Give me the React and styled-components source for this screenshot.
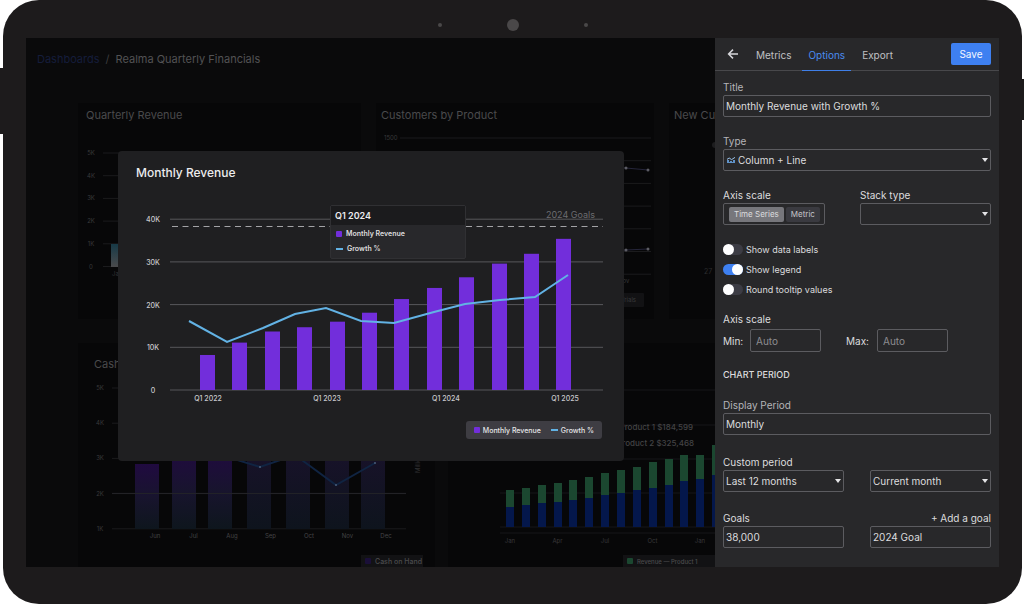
import React, { useState } from "react";
import styled, { createGlobalStyle } from "styled-components";

const revenue = [8.2, 11.1, 13.7, 14.7, 16, 18.1, 21.3, 23.9, 26.4, 29.6, 31.9, 35.4];
const growth = [
  [71, 131], [109, 152], [145, 138], [177, 124], [208, 118], [243, 131],
  [276, 133], [316, 122], [347, 114], [382, 110], [417, 107], [450, 85],
];
const quarters = [[90, "Q1 2022"], [209, "Q1 2023"], [328, "Q1 2024"], [447, "Q1 2025"]];

const products = [
  [20, 37], [22, 39], [24, 42], [25, 44], [27, 47], [29, 50], [32, 54],
  [34, 57], [37, 60], [39, 65], [42, 68], [46, 72], [48, 72], [52, 82],
];

function ArrowLeft() {
  return (
    <svg width="12" height="12" viewBox="0 0 12 12" fill="none" stroke="#d6d6da" strokeWidth="1.5">
      <path d="M11 6H2M6 1.6L1.6 6L6 10.4" />
    </svg>
  );
}

function ColumnLineIcon() {
  return (
    <svg width="9" height="8" viewBox="0 0 9 8">
      <path d="M0 4h2v3H0zM3 5h2v2H3zM6 4h2v3H6z" fill="#5f92c8" />
      <path d="M0 6.5h8" stroke="#5f92c8" />
      <path d="M0 3.4L2.2 2L4.6 3.6L8 1.4" stroke="#9cc4ec" fill="none" />
    </svg>
  );
}

function RevenueChart() {
  return (
    <Chart viewBox="0 0 506 214">
      {[0, 10, 20, 30, 40].map((v) => (
        <g key={v}>
          <line x1="52" x2="485" y1={200 - v * 4.27} y2={200 - v * 4.27} stroke="#57575b" />
          <text x="35" y={203 - v * 4.27} textAnchor="middle" fontSize="7" fontWeight="500" fill="#c9c9cc">
            {v ? `${v}K` : "0"}
          </text>
        </g>
      ))}
      <line x1="54" x2="485" y1="36.5" y2="36.5" stroke="#a3a3a6" strokeDasharray="6 4.5" />
      <text x="477" y="28" textAnchor="end" fontSize="9" fill="#6c6c70">2024 Goals</text>
      {revenue.map((v, i) => (
        <rect key={i} x={Math.round(82 + i * 32.4)} y={200 - v * 4.27} width="15" height={v * 4.27} fill="#722edb" />
      ))}
      <polyline points={growth.join(" ")} fill="none" stroke="#62b2e4" strokeWidth="2" />
      {quarters.map(([x, label]) => (
        <text key={label} x={x} y="211" textAnchor="middle" fontSize="7" fontWeight="500" fill="#c9c9cc">
          {label}
        </text>
      ))}
    </Chart>
  );
}

function QuarterlyChart() {
  return (
    <Chart viewBox="0 0 283 180">
      <defs>
        <linearGradient id="teal" x1="0" x2="0" y1="0" y2="1">
          <stop offset="0" stopColor="#173a47" />
          <stop offset="1" stopColor="#4a4a4c" />
        </linearGradient>
      </defs>
      {["5K", "4K", "3K", "2K", "1K", "0"].map((label, i) => (
        <g key={label}>
          <line x1="25" x2="268" y1={26 + i * 22.7} y2={26 + i * 22.7} stroke="#1b1b1d" />
          <text x="13" y={28 + i * 22.7} textAnchor="middle" fontSize="6" fill="#3a3a3c">{label}</text>
        </g>
      ))}
      <rect x="33" y="117" width="14" height="23" fill="url(#teal)" />
      <text x="34" y="149" fontSize="6" fill="#333335">Jan</text>
    </Chart>
  );
}

function CustomersChart() {
  return (
    <Chart viewBox="0 0 278 180">
      {[0, 1, 2, 3, 4, 5, 6].map((i) => (
        <line key={i} x1="24" x2="275" y1={11 + i * 22.7} y2={11 + i * 22.7} stroke="#1b1b1d" />
      ))}
      <text x="8" y="13" fontSize="6" fill="#3a3a3c">1500</text>
      <g stroke="#25253a" fill="#4b4b52">
        <polyline points="200,38 250,41 272,43" fill="none" />
        <polyline points="200,126 250,123 272,122" fill="none" />
      </g>
      <g fill="#5c5c64">
        <circle cx="250" cy="41" r="1.5" />
        <circle cx="272" cy="43" r="1.5" />
        <circle cx="250" cy="123" r="1.5" />
        <circle cx="272" cy="122" r="1.5" />
      </g>
      <text x="242" y="156" fontSize="6" fill="#3a3a3c">Nov</text>
      <rect x="220" y="166" width="48" height="14" rx="1" fill="#121214" />
      <text x="260" y="175" textAnchor="end" fontSize="6" fill="#3a3a3c">Trials</text>
    </Chart>
  );
}

function NewCustomersChart() {
  return (
    <Chart viewBox="0 0 46 180">
      <circle cx="46" cy="18" r="3" fill="#1d1d1f" />
      <text x="35" y="147" fontSize="7" fill="#2c2c2e">27</text>
    </Chart>
  );
}

function CashChart() {
  return (
    <Chart viewBox="0 0 357 170">
      <defs>
        <linearGradient id="cash" x1="0" x2="0" y1="0" y2="1">
          <stop offset="0" stopColor="#200a40" />
          <stop offset="0.5" stopColor="#18142e" />
          <stop offset="1" stopColor="#0e161d" />
        </linearGradient>
        <linearGradient id="slate" x1="0" x2="0" y1="0" y2="1">
          <stop offset="0" stopColor="#18122a" />
          <stop offset="1" stopColor="#0e141d" />
        </linearGradient>
      </defs>
      {["5K", "4K", "3K", "2K", "1K"].map((label, i) => (
        <g key={label}>
          <line x1="34" x2="328" y1={13 + i * 35.2} y2={13 + i * 35.2} stroke="#1b1b1d" />
          <text x="22" y={15 + i * 35.2} textAnchor="middle" fontSize="6" fill="#3a3a3c">{label}</text>
        </g>
      ))}
      {[57, 94, 130, 169, 208, 247, 283].map((x, i) => (
        <rect key={x} x={x} y={i ? 76 : 89} width="24" height={i ? 78 : 65} fill={i < 3 ? "url(#cash)" : "url(#slate)"} />
      ))}
      <line x1="34" x2="328" y1="118.4" y2="118.4" stroke="#242429" />
      <polyline points="130,76 182,92 217,80 258,110 297,88" fill="none" stroke="#102442" strokeWidth="2" />
      <g fill="#4a5c7a">
        <circle cx="182" cy="92" r="1" />
        <circle cx="258" cy="110" r="1" />
        <circle cx="297" cy="88" r="1" />
      </g>
      {["Jun", "Jul", "Aug", "Sep", "Oct", "Nov", "Dec"].map((m, i) => (
        <text key={m} x={77 + i * 38.5} y="163" textAnchor="middle" fontSize="6" fill="#444446">{m}</text>
      ))}
      <text transform="translate(342 98) rotate(-90)" fontSize="6" fill="#2f2f31">Million</text>
    </Chart>
  );
}

function ProductChart() {
  return (
    <Chart viewBox="0 0 267 170">
      {[15, 50, 84, 118, 152, 158].map((y) => (
        <line key={y} x1="52" x2="267" y1={y} y2={y} stroke="#171719" />
      ))}
      {products.map(([blue, total], i) => (
        <g key={i}>
          <rect x={Math.round(58 + i * 15.85)} y={152 - total} width="8" height={total - blue} fill="#1b4730" />
          <rect x={Math.round(58 + i * 15.85)} y={152 - blue} width="8" height={blue} fill="#04174b" />
        </g>
      ))}
      {["Jan", "Apr", "Jul", "Oct", "Jan"].map((m, i) => (
        <text key={i} x={62 + i * 47.5} y="168" textAnchor="middle" fontSize="6" fill="#38383a">{m}</text>
      ))}
      <text x="245" y="55" textAnchor="end" fontSize="8" fontWeight="500" fill="#434345">Product 1 $184,599</text>
      <text x="246" y="71" textAnchor="end" fontSize="8" fontWeight="500" fill="#434345">Product 2 $325,468</text>
    </Chart>
  );
}

function Switch({ label, on }) {
  const [checked, setChecked] = useState(on);
  return (
    <SwitchLabel>
      <SwitchInput type="checkbox" checked={checked} onChange={() => setChecked(!checked)} />
      {label}
    </SwitchLabel>
  );
}

export default function App() {
  return (
    <>
      <GlobalStyle />
      <Device>
        <Camera>
          <Dot $size={4} />
          <Dot $size={12} />
          <Dot $size={4} />
        </Camera>
        <SideButton $side="left" />
        <SideButton $side="right" />
        <Screen>
          <Dashboard>
            <Breadcrumb>
              <a href="#dashboards">Dashboards</a>
              <span>/</span>
              <strong>Realma Quarterly Financials</strong>
            </Breadcrumb>
            <TopCards>
              <Card>
                <CardTitle>Quarterly Revenue</CardTitle>
                <QuarterlyChart />
              </Card>
              <Card $tight>
                <CardTitle>Customers by Product</CardTitle>
                <CustomersChart />
              </Card>
              <Card $tight>
                <CardTitle>New Cu</CardTitle>
                <NewCustomersChart />
              </Card>
            </TopCards>
            <BottomCards>
              <Card>
                <CardTitle $indent>Cash on Hand</CardTitle>
                <CashChart />
                <CardLegend>
                  <Swatch $color="#1a0f38" />
                  Cash on Hand
                </CardLegend>
              </Card>
              <Card>
                <CardTitle $indent>Revenue</CardTitle>
                <ProductChart />
                <CardLegend $wide>
                  <Swatch $color="#1b4730" />
                  Revenue — Product 1
                </CardLegend>
              </Card>
            </BottomCards>
            <Overlay>
              <Modal>
                <ModalTitle>Monthly Revenue</ModalTitle>
                <ChartArea>
                  <RevenueChart />
                  <Tooltip>
                    <TooltipTitle>Q1 2024</TooltipTitle>
                    <TooltipRow>
                      <Swatch $color="#722edb" />
                      Monthly Revenue
                    </TooltipRow>
                    <TooltipRow>
                      <Dash />
                      Growth %
                    </TooltipRow>
                  </Tooltip>
                </ChartArea>
                <Legend>
                  <Swatch $color="#722edb" />
                  <span>Monthly Revenue</span>
                  <Dash />
                  <span>Growth %</span>
                </Legend>
              </Modal>
            </Overlay>
          </Dashboard>

          <Panel>
            <PanelHeader>
              <BackButton aria-label="Back">
                <ArrowLeft />
              </BackButton>
              <Tab>Metrics</Tab>
              <Tab $active>Options</Tab>
              <Tab>Export</Tab>
              <SaveButton>Save</SaveButton>
            </PanelHeader>
            <Form>
              <Field>
                <Label htmlFor="title" $dim>Title</Label>
                <Input id="title" defaultValue="Monthly Revenue with Growth %" />
              </Field>
              <Field>
                <Label htmlFor="type" $dim>Type</Label>
                <SelectBox $icon>
                  <ColumnLineIcon />
                  <Select id="type">
                    <option>Column + Line</option>
                  </Select>
                </SelectBox>
              </Field>
              <ScaleRow>
                <Field>
                  <Label as="span">Axis scale</Label>
                  <Segmented>
                    <Segment type="button" $active>Time Series</Segment>
                    <Segment type="button">Metric</Segment>
                  </Segmented>
                </Field>
                <Field>
                  <Label htmlFor="stack">Stack type</Label>
                  <SelectBox>
                    <Select id="stack">
                      <option></option>
                    </Select>
                  </SelectBox>
                </Field>
              </ScaleRow>
              <Switches>
                <Switch label="Show data labels" on={false} />
                <Switch label="Show legend" on />
                <Switch label="Round tooltip values" on={false} />
              </Switches>
              <Label as="span">Axis scale</Label>
              <Range>
                <RangeLabel>
                  Min:
                  <RangeInput placeholder="Auto" />
                </RangeLabel>
                <RangeLabel>
                  Max:
                  <RangeInput placeholder="Auto" />
                </RangeLabel>
              </Range>
              <SectionTitle>CHART PERIOD</SectionTitle>
              <Field>
                <Label htmlFor="display" $dim>Display Period</Label>
                <Input id="display" defaultValue="Monthly" />
              </Field>
              <PeriodLabels>
                <Label htmlFor="from">Custom period</Label>
              </PeriodLabels>
              <Pair>
                <SelectBox>
                  <Select id="from">
                    <option>Last 12 months</option>
                  </Select>
                </SelectBox>
                <SelectBox>
                  <Select aria-label="Custom period end">
                    <option>Current month</option>
                  </Select>
                </SelectBox>
              </Pair>
              <PeriodLabels>
                <Label htmlFor="goal">Goals</Label>
                <AddGoal type="button">+ Add a goal</AddGoal>
              </PeriodLabels>
              <Pair>
                <Input id="goal" defaultValue="38,000" />
                <Input aria-label="Goal name" defaultValue="2024 Goal" />
              </Pair>
            </Form>
          </Panel>
        </Screen>
      </Device>
    </>
  );
}

const GlobalStyle = createGlobalStyle`
  * {
    box-sizing: border-box;
  }
  body {
    margin: 0;
    background: #fff;
    font-family: Inter, "Liberation Sans", sans-serif;
  }
  button, input, select {
    font: inherit;
    color: inherit;
    margin: 0;
  }
  button {
    border: 0;
    padding: 0;
    background: none;
    cursor: pointer;
  }
`;

const Device = styled.div`
  position: relative;
  margin: 0 2px 0 3px;
  padding: 0 23px 37px;
  border-radius: 36px;
  background: #1d1b1c;
`;

const Camera = styled.div`
  display: flex;
  justify-content: center;
  align-items: center;
  gap: 65px;
  height: 38px;
  padding-top: 12px;
`;

const Dot = styled.span`
  width: ${({ $size }) => $size}px;
  height: ${({ $size }) => $size}px;
  border-radius: 50%;
  background: #4a4849;
`;

const SideButton = styled.span`
  position: absolute;
  top: ${({ $side }) => ($side === "left" ? 68 : 79)}px;
  ${({ $side }) => $side}: -3px;
  width: 3px;
  height: ${({ $side }) => ($side === "left" ? 66 : 41)}px;
  background: #1d1b1c;
`;

const Screen = styled.main`
  display: grid;
  grid-template-columns: minmax(0, 1fr) 284px;
`;

const Dashboard = styled.section`
  position: relative;
  display: flex;
  flex-direction: column;
  overflow: hidden;
  background: #0a0a0b;
`;

const Breadcrumb = styled.nav`
  display: flex;
  align-items: center;
  gap: 6px;
  height: 42px;
  margin-bottom: 23px;
  padding-left: 11px;
  font-size: 11px;
  color: #3c3c3e;
  a {
    color: #151d3b;
    text-decoration: none;
  }
  strong {
    font-weight: 400;
    color: #525254;
  }
`;

const TopCards = styled.div`
  display: grid;
  grid-template-columns: 283fr 278fr 46fr;
  gap: 15px;
  margin: 0 0 24px 52px;
`;

const BottomCards = styled.div`
  display: grid;
  grid-template-columns: 357fr 267fr;
  gap: 13px;
  flex: 1;
  margin-left: 52px;
`;

const Card = styled.article`
  min-width: 0;
  overflow: hidden;
  background: #070708;
  padding-bottom: 12px;
  h2 {
    padding-left: ${({ $tight }) => ($tight ? 5 : 8)}px;
  }
  ${BottomCards} & {
    padding-bottom: 0;
  }
`;

const CardTitle = styled.h2`
  margin: 0;
  text-indent: ${({ $indent }) => ($indent ? 8 : 0)}px;
  font-size: 11px;
  font-weight: 400;
  line-height: 24px;
  white-space: nowrap;
  color: #4a4a4c;
  ${BottomCards} & {
    line-height: 22px;
    padding-top: 10px;
  }
`;

const Chart = styled.svg`
  display: block;
  width: 100%;
`;

const CardLegend = styled.div`
  display: flex;
  align-items: center;
  gap: 4px;
  width: ${({ $wide }) => ($wide ? 92 : 62)}px;
  height: 12px;
  margin: 10px ${({ $wide }) => ($wide ? 0 : 12)}px 0 auto;
  padding-left: 4px;
  background: #121214;
  font-size: ${({ $wide }) => ($wide ? 6 : 7)}px;
  font-weight: 500;
  white-space: nowrap;
  color: #4b4b4d;
`;

const Overlay = styled.div`
  position: absolute;
  inset: 0;
  display: flex;
  align-items: flex-start;
  padding: 113px 91px 0 92px;
`;

const Modal = styled.section`
  flex: 1;
  padding-bottom: 22px;
  border-radius: 4px;
  background: #1f1f21;
`;

const ModalTitle = styled.h1`
  margin: 0;
  padding: 12px 18px 8px;
  font-size: 12px;
  font-weight: 500;
  line-height: 19px;
  color: #ececee;
`;

const ChartArea = styled.div`
  position: relative;
`;

const Tooltip = styled.div`
  position: absolute;
  top: 15px;
  left: 212px;
  width: 136px;
  padding-bottom: 2px;
  border: 1px solid #303033;
  border-radius: 2px;
  background: #28282b;
`;

const TooltipTitle = styled.div`
  margin-bottom: 1px;
  padding-left: 4px;
  background: #1b1b1d;
  font-size: 9px;
  font-weight: 600;
  line-height: 19px;
  color: #ececee;
`;

const TooltipRow = styled.div`
  display: flex;
  align-items: center;
  gap: 4px;
  height: 15px;
  padding-left: 5px;
  font-size: 7px;
  font-weight: 600;
  color: #dededf;
`;

const Swatch = styled.span`
  width: 6px;
  height: 6px;
  border-radius: 1px;
  background: ${({ $color }) => $color};
`;

const Dash = styled.span`
  width: 7px;
  height: 2px;
  background: #62b2e4;
`;

const Legend = styled.div`
  display: flex;
  align-items: center;
  gap: 3px;
  width: fit-content;
  height: 18px;
  margin: 17px 22px 0 auto;
  padding: 0 8px;
  border-radius: 3px;
  background: #3e3d43;
  font-size: 7px;
  font-weight: 500;
  color: #e6e6e8;
  ${Dash} {
    margin-left: 7px;
  }
`;

const Panel = styled.aside`
  background: #28282a;
  font-size: 10px;
  color: #dcdcde;
`;

const PanelHeader = styled.header`
  display: flex;
  align-items: center;
  height: 33px;
  padding: 0 8px 0 12px;
  border-bottom: 1px solid #48484b;
`;

const BackButton = styled.button`
  display: flex;
  margin-right: 11px;
`;

const Tab = styled.button`
  height: 33px;
  padding: 2px 6px 0;
  margin-right: 5px;
  border-bottom: 1px solid ${({ $active }) => ($active ? "#3f7fe8" : "transparent")};
  color: ${({ $active }) => ($active ? "#4a8cf0" : "#c0c0c4")};
`;

const SaveButton = styled.button`
  width: 40px;
  height: 22px;
  margin-left: auto;
  border-radius: 2px;
  background: #3e80f1;
  color: #f2f6ff;
`;

const Form = styled.form`
  padding: 8px 8px 19px;
`;

const Field = styled.div`
  display: flex;
  flex-direction: column;
  margin-bottom: 16px;
`;

const Label = styled.label`
  line-height: 16px;
  color: ${({ $dim }) => ($dim ? "#b4b4b8" : "#dcdcde")};
`;

const Input = styled.input`
  width: 100%;
  height: 22px;
  padding: 0 2px;
  border: 1px solid #5c5c60;
  border-radius: 2px;
  background: transparent;
`;

const SelectBox = styled.div`
  display: flex;
  align-items: center;
  position: relative;
  height: 22px;
  padding-left: ${({ $icon }) => ($icon ? 3 : 0)}px;
  border: 1px solid #5c5c60;
  border-radius: 2px;
  &::after {
    content: "";
    position: absolute;
    right: 2px;
    border: 3px solid transparent;
    border-top: 4px solid #e4e4e6;
    border-bottom: 0;
    pointer-events: none;
  }
`;

const Select = styled.select`
  flex: 1;
  appearance: none;
  min-width: 0;
  height: 20px;
  padding: 0 10px 0 2px;
  border: 0;
  background: transparent;
`;

const ScaleRow = styled.div`
  display: grid;
  grid-template-columns: 102px 131px;
  justify-content: space-between;
  ${Field} {
    margin-bottom: 14px;
  }
`;

const Segmented = styled.div`
  display: flex;
  align-items: center;
  gap: 2px;
  height: 22px;
  padding: 0 5px;
  border: 1px solid #5c5c60;
  border-radius: 2px;
`;

const Segment = styled.button`
  height: 15px;
  padding: 0 5px;
  border-radius: 2px;
  background: ${({ $active }) => ($active ? "#77777c" : "#3a3a40")};
  font-size: 8px;
  white-space: nowrap;
  color: ${({ $active }) => ($active ? "#dcdcde" : "#c4c4c8")};
`;

const Switches = styled.div`
  display: grid;
  margin-bottom: 12px;
`;

const SwitchLabel = styled.label`
  display: flex;
  align-items: center;
  gap: 3px;
  height: 20px;
  font-size: 9px;
`;

const SwitchInput = styled.input`
  appearance: none;
  display: flex;
  width: 20px;
  height: 11px;
  border-radius: 6px;
  background: #3c3c44;
  &::before {
    content: "";
    width: 11px;
    height: 11px;
    border-radius: 50%;
    background: #fff;
  }
  &:checked {
    justify-content: flex-end;
    background: #3e80f1;
  }
`;

const Range = styled.div`
  display: grid;
  grid-template-columns: 98px 102px;
  gap: 25px;
  margin: 2px 0 15px;
`;

const RangeLabel = styled.label`
  display: flex;
  align-items: center;
  justify-content: space-between;
`;

const RangeInput = styled(Input)`
  width: 71px;
  height: 23px;
  padding-left: 5px;
  &::placeholder {
    color: #8c8c90;
    opacity: 1;
  }
`;

const SectionTitle = styled.h3`
  margin: 0 0 14px;
  font-size: 9px;
  font-weight: 500;
  line-height: 16px;
`;

const PeriodLabels = styled.div`
  display: flex;
  justify-content: space-between;
  margin-top: 18px;
  ${Field} + & {
    margin-top: 0;
    padding-top: 3px;
  }
`;

const AddGoal = styled.button`
  line-height: 16px;
`;

const Pair = styled.div`
  display: grid;
  grid-template-columns: 1fr 1fr;
  gap: 26px;
`;
